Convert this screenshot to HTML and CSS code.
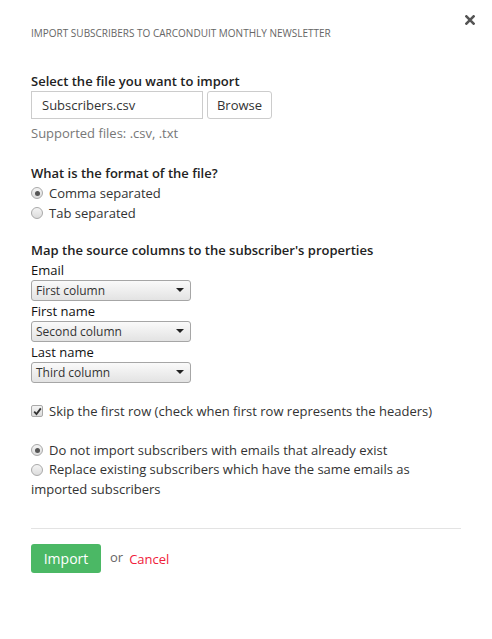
FILE: index.html
```html
<!DOCTYPE html>
<html>
<head>
<meta charset="utf-8">
<link rel="stylesheet" href="styles.css">
</head>
<body>
<div class="modal">
  <div class="header">
    <div class="title">Import subscribers to CarConduit Monthly Newsletter</div>
    <button class="close" aria-label="Close">
      <svg width="10" height="10" viewBox="0 0 10 10"><path d="M1.4 1.4 L8.6 8.6 M8.6 1.4 L1.4 8.6" stroke="#555" stroke-width="2.6" stroke-linecap="square"/></svg>
    </button>
  </div>

  <div class="section file-section">
    <div class="heading">Select the file you want to import</div>
    <div class="file-row">
      <input class="file-input" type="text" value="Subscribers.csv">
      <button class="browse">Browse</button>
    </div>
    <div class="hint">Supported files: .csv, .txt</div>
  </div>

  <div class="section format-section">
    <div class="heading">What is the format of the file?</div>
    <label class="option"><span class="radio checked"></span>Comma separated</label>
    <label class="option"><span class="radio"></span>Tab separated</label>
  </div>

  <div class="section map-section">
    <div class="heading">Map the source columns to the subscriber's properties</div>
    <div class="field-label">Email</div>
    <div class="select"><span>First column</span></div>
    <div class="field-label">First name</div>
    <div class="select"><span>Second column</span></div>
    <div class="field-label">Last name</div>
    <div class="select"><span>Third column</span></div>
  </div>

  <div class="section skip-section">
    <label class="option"><span class="checkbox checked"><svg width="9" height="9" viewBox="0 0 9 9"><path d="M1.2 4.6 L3.5 7 L7.8 1.4" fill="none" stroke="#333" stroke-width="1.8"/></svg></span>Skip the first row (check when first row represents the headers)</label>
  </div>

  <div class="section dup-section">
    <label class="option"><span class="radio checked"></span>Do not import subscribers with emails that already exist</label>
    <label class="option wrap"><span class="radio"></span>Replace existing subscribers which have the same emails as imported subscribers</label>
  </div>

  <hr class="divider">

  <div class="actions">
    <button class="import">Import</button>
    <span class="or">or</span>
    <a class="cancel" href="#">Cancel</a>
  </div>
</div>
</body>
</html>
```

FILE: styles.css
```css
html, body {
  margin: 0;
  padding: 0;
  background: #fff;
}
body {
  font-family: "Open Sans", "Liberation Sans", sans-serif;
  font-size: 13px;
  color: #333;
}
.modal {
  padding: 0 31px;
  width: 430px;
}
.header {
  position: relative;
  padding-top: 25px;
}
.title {
  font-size: 10px;
  line-height: 16px;
  text-transform: uppercase;
  color: #666;
}
.close {
  position: absolute;
  top: 15px;
  right: -14px;
  border: 0;
  background: none;
  padding: 0;
  width: 10px;
  height: 10px;
  display: flex;
}
.section {
  display: flex;
  flex-direction: column;
  align-items: flex-start;
}
.heading {
  font-weight: 600;
  line-height: 20px;
  color: #222;
}
.file-section {
  margin-top: 30px;
}
.file-row {
  display: flex;
  gap: 4px;
  height: 28px;
}
.file-input {
  box-sizing: border-box;
  width: 172px;
  height: 28px;
  border: 1px solid #ccc;
  padding: 0 10px;
  font: inherit;
  color: #333;
  margin: 0;
  outline: none;
}
.browse {
  box-sizing: border-box;
  height: 28px;
  width: 65px;
  border: 1px solid #ccc;
  border-radius: 3px;
  background: #fff;
  font: inherit;
  color: #333;
  padding: 0;
}
.hint {
  margin-top: 4px;
  line-height: 20px;
  color: #777;
}
.format-section {
  margin-top: 20px;
}
.option {
  display: flex;
  align-items: center;
  line-height: 20px;
  gap: 6px;
}
.option.wrap {
  display: block;
  line-height: 19.5px;
}
.option.wrap .radio {
  display: inline-block;
  vertical-align: -2px;
  margin-right: 6px;
}
.radio {
  box-sizing: border-box;
  width: 12px;
  height: 12px;
  border-radius: 50%;
  border: 1px solid #a9a9a9;
  background: linear-gradient(#f4f4f4, #dcdcdc);
  position: relative;
  flex: none;
}
.radio.checked::after {
  content: "";
  position: absolute;
  left: 2.5px;
  top: 2.5px;
  width: 5px;
  height: 5px;
  border-radius: 50%;
  background: #555;
}
.checkbox {
  box-sizing: border-box;
  width: 12px;
  height: 12px;
  border: 1px solid #a9a9a9;
  border-radius: 2px;
  background: linear-gradient(#f4f4f4, #dcdcdc);
  display: flex;
  align-items: center;
  justify-content: center;
  flex: none;
}
.map-section {
  margin-top: 17px;
}
.field-label {
  line-height: 20px;
  height: 20px;
  font-weight: 500;
  color: #111;
}
.select {
  box-sizing: border-box;
  width: 160px;
  height: 21px;
  flex: none;
  border: 1px solid #a6a6a6;
  border-radius: 3px;
  background: linear-gradient(#fafafa, #e3e3e3);
  font-size: 12px;
  color: #333;
  padding: 0 4px;
  display: flex;
  align-items: center;
  position: relative;
}
.select::after {
  content: "";
  position: absolute;
  right: 6px;
  top: 7px;
  border-left: 4px solid transparent;
  border-right: 4px solid transparent;
  border-top: 4px solid #222;
}
.skip-section {
  margin-top: 18px;
}
.dup-section {
  margin-top: 19px;
}
.divider {
  border: 0;
  border-top: 1px solid #e3e3e3;
  margin: 29px 0 0;
}
.actions {
  margin-top: 15px;
  display: flex;
  align-items: center;
  padding-bottom: 40px;
}
.import {
  width: 70px;
  height: 29px;
  border: 0;
  border-radius: 3px;
  background: #4bb865;
  color: #fff;
  font: inherit;
  font-size: 14px;
  padding: 0;
}
.or {
  margin-left: 9px;
  color: #666;
  font-size: 13px;
  position: relative;
  top: -2px;
}
.cancel {
  margin-left: 6px;
  color: #f0203a;
  text-decoration: none;
}
```
